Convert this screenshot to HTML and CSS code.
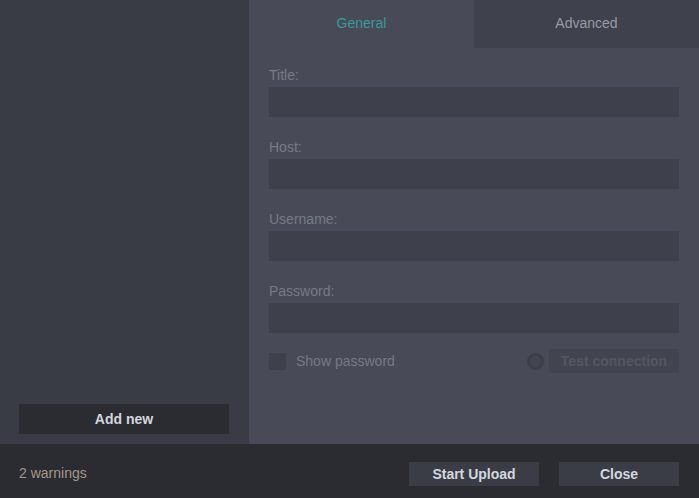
FILE: index.html
```html
<!DOCTYPE html>
<html>
<head>
<meta charset="utf-8">
<link rel="stylesheet" href="styles.css">
</head>
<body>
<div class="app">
  <div class="main">
    <aside class="sidebar">
      <div class="list"></div>
      <button class="add-btn">Add new</button>
    </aside>
    <section class="panel">
      <div class="tabs">
        <div class="tab active">General</div>
        <div class="tab">Advanced</div>
      </div>
      <div class="form">
        <div class="field">
          <label class="label">Title:</label>
          <div class="input"></div>
        </div>
        <div class="field">
          <label class="label">Host:</label>
          <div class="input"></div>
        </div>
        <div class="field">
          <label class="label">Username:</label>
          <div class="input"></div>
        </div>
        <div class="field">
          <label class="label">Password:</label>
          <div class="input"></div>
        </div>
        <div class="options">
          <div class="check-wrap">
            <span class="checkbox"></span>
            <span class="check-label">Show password</span>
          </div>
          <div class="test-wrap">
            <span class="status"></span>
            <button class="test-btn">Test connection</button>
          </div>
        </div>
      </div>
    </section>
  </div>
  <footer class="footer">
    <span class="warnings">2 warnings</span>
    <div class="actions">
      <button class="foot-btn upload">Start Upload</button>
      <button class="foot-btn close">Close</button>
    </div>
  </footer>
</div>
</body>
</html>
```
FILE: styles.css
```css
* { box-sizing: border-box; }
html, body { margin: 0; padding: 0; }
body {
  width: 699px;
  height: 498px;
  overflow: hidden;
  font-family: "Liberation Sans", Arial, sans-serif;
  background: #2b2c31;
}
.app { display: flex; flex-direction: column; height: 498px; }
.main { display: flex; height: 444px; }
.sidebar {
  width: 249px;
  background: #393c45;
  display: flex;
  flex-direction: column;
  padding: 0 20px 10px 19px;
}
.list { flex: 1; }
.add-btn {
  height: 30px;
  width: 210px;
  border: none;
  background: #2b2c31;
  color: #d3d7df;
  font-family: inherit;
  font-size: 14px;
  font-weight: bold;
  padding: 0;
}
.panel {
  flex: 1;
  background: #484b57;
  display: flex;
  flex-direction: column;
}
.tabs { display: flex; height: 48px; }
.tab {
  flex: 1;
  display: flex;
  align-items: center;
  justify-content: center;
  font-size: 14px;
  color: #979ba5;
  background: #3f414d;
  padding-bottom: 2px;
}
.tab.active { background: transparent; color: #3b989c; }
.form { padding: 18px 20px 0 20px; }
.field { display: flex; flex-direction: column; margin-bottom: 21px; }
.field:nth-child(4) { margin-bottom: 16px; }
.label {
  font-size: 14px;
  color: #767a85;
  height: 21px;
  line-height: 19px;
}
.input { height: 30px; background: #3e414c; }
.options {
  display: flex;
  justify-content: space-between;
  align-items: center;
}
.check-wrap { display: flex; align-items: center; }
.checkbox {
  width: 17px;
  height: 17px;
  background: #3e414c;
  margin-right: 10px;
}
.check-label { font-size: 14px; color: #757984; }
.test-wrap { display: flex; align-items: center; }
.status {
  width: 17px;
  height: 17px;
  border-radius: 50%;
  border: 3px solid #3c3f49;
  background: #42454f;
  margin-right: 5px;
}
.test-btn {
  width: 130px;
  height: 24px;
  border: none;
  background: #42454f;
  color: #535763;
  font-family: inherit;
  font-size: 14px;
  font-weight: bold;
  padding: 0;
}
.footer {
  height: 54px;
  background: #2b2c31;
  display: flex;
  align-items: center;
  justify-content: space-between;
  padding: 6px 20px 0 19px;
}
.warnings { font-size: 14px; color: #a3968b; margin-top: -2px; }
.actions { display: flex; gap: 20px; }
.foot-btn {
  height: 24px;
  border: none;
  background: #3a3d46;
  color: #d3d7df;
  font-family: inherit;
  font-size: 14px;
  font-weight: bold;
  padding: 0;
}
.upload { width: 130px; }
.close { width: 120px; }
```
